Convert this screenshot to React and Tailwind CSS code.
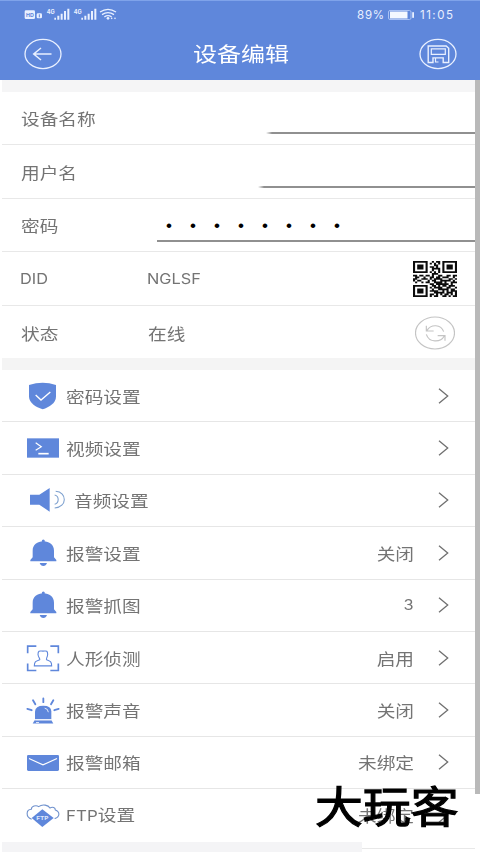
import React from 'react';

const CJK = "font-['Noto_Sans_CJK_SC',sans-serif]";
const LATIN = "font-['Inter','Noto_Sans_CJK_SC',sans-serif]";

function Wide({ children, right = false, className = '' }) {
  return (
    <span
      className={`block whitespace-nowrap scale-x-[1.167] text-[16px] leading-[20px] font-normal text-[#747474] ${right ? 'origin-right' : 'origin-left'} ${className || CJK}`}
    >
      {children}
    </span>
  );
}

function Chevron() {
  return (
    <svg className="h-[16px] w-[11px]" viewBox="0 0 11 16" fill="none" stroke="#707070" strokeWidth="1.3">
      <path d="M1 .8 9.7 8 1 15.2" />
    </svg>
  );
}

const BLUE = '#5f87db';

const ICONS = {
  shield: {
    box: '72 0 126 156',
    art: (
      <>
        <path d="M87 45Q108 38 128 38T168 45V80C168 99 148 111 128 118C106 110 88 99 87 80Z" fill={BLUE} />
        <path d="m107 75 16 15 28-24" fill="none" stroke="#fff" strokeWidth="4" />
      </>
    ),
  },
  video: {
    box: '72 157 126 156',
    art: (
      <>
        <path d="M81 206h96v58H81z" fill={BLUE} />
        <path d="m107 219 17 12-17 11" fill="none" stroke="#fff" strokeWidth="3.5" />
        <path d="M115 252h31" stroke="#fff" strokeWidth="5" />
      </>
    ),
  },
  audio: {
    box: '72 314 126 156',
    art: (
      <>
        <path d="M90 376h28l31-20v71l-31-21H90z" fill={BLUE} />
        <g fill="none" stroke="#7da0cf" strokeWidth="3.2">
          <path d="M164 377C178 380 178 401 164 405" />
          <path d="M167 366C202 368 202 414 164 416" />
        </g>
      </>
    ),
  },
  bell: {
    box: '72 6 126 156',
    art: (
      <g fill={BLUE}>
        <circle cx="130" cy="48" r="4.5" />
        <path d="M98 97V77C98 59 112 50 130 49C148 50 162 59 162 77V97L169 105V109H91V105Z" />
        <path d="M119 114h22q-3 9-11 9t-11-9" />
      </g>
    ),
  },
  person: {
    box: '72 319.5 126 156',
    art: (
      <g fill="none" stroke={BLUE}>
        <path d="M83 383v-21h26M151 362h24v21M83 414v21h26M151 435h24v-21" strokeWidth="5" />
        <path
          d="M103 421H155C155 407 150 407 140 403C137 400 142 397 143 387C143 373 137 377 129 377S114 373 114 387C115 397 122 400 119 403C108 407 103 407 103 421Z"
          strokeWidth="3.3"
        />
      </g>
    ),
  },
  siren: {
    box: '72 11.4 126 156',
    art: (
      <>
        <path d="M105 117V94Q106 77 130 77T154 94V117Z" fill={BLUE} />
        <path d="M104 120H154L160 130H98Z" fill={BLUE} />
        <path d="M106 119h47M134 84q10 1 11 12M108 127h9" fill="none" stroke="#fff" strokeWidth="2.4" />
        <path d="M130 55v11M99 60l7 12M160 60l-7 12M82 86l13 4M176 86l-13 4" stroke={BLUE} strokeWidth="5.5" strokeLinecap="round" />
      </>
    ),
  },
  mail: {
    box: '72 168.3 126 156',
    art: (
      <>
        <rect x="81" y="225" width="96" height="48" rx="4" fill={BLUE} />
        <path d="m87 236 42 19 42-19" fill="none" stroke="#fff" strokeWidth="3.5" />
      </>
    ),
  },
  ftp: {
    box: '72 325.2 126 156',
    art: (
      <>
        <path
          d="M95 416C76 409 78 387 94 386C94 377 108 372 116 378C128 369 145 374 150 382C158 378 166 381 166 388C180 393 181 409 164 414"
          fill="none"
          stroke="#6f91cd"
          strokeWidth="3.3"
        />
        <path d="m127 386 34 26-34 27-32-27z" fill={BLUE} />
        <text x="127" y="418" textAnchor="middle" fill="#dfe8fb" fontSize="16" fontWeight="700" fontFamily="Inter, sans-serif" textLength="37" lengthAdjust="spacingAndGlyphs">
          FTP
        </text>
      </>
    ),
  },
};

const SETTINGS = [
  { icon: 'shield', label: '密码设置' },
  { icon: 'video', label: '视频设置' },
  { icon: 'audio', label: '音频设置', indent: true },
  { icon: 'bell', label: '报警设置', value: '关闭' },
  { icon: 'bell', label: '报警抓图', value: '3' },
  { icon: 'person', label: '人形侦测', value: '启用' },
  { icon: 'siren', label: '报警声音', value: '关闭' },
  { icon: 'mail', label: '报警邮箱', value: '未绑定' },
  { icon: 'ftp', label: 'FTP设置', value: '未绑定' },
];

const QR = [
  '111111100101101111111',
  '100000101010101000001',
  '101110100011001011101',
  '101110101101001011101',
  '101110100111101011101',
  '100000100100101000001',
  '111111101010101111111',
  '000000000111000000000',
  '110110110100110011011',
  '011001001101101110010',
  '110011101011110001101',
  '101100010110011111010',
  '010010110011110100111',
  '000000001101111110100',
  '111111100110101101110',
  '100000101011110011001',
  '101110100100111110110',
  '101110101111001010111',
  '101110100011111011101',
  '100000101101010110101',
  '111111101011001101011',
];

function QrCode() {
  const d = QR.map((row, y) => [...row].map((c, x) => (c === '1' ? `M${x} ${y}h1v1h-1z` : '')).join('')).join('');
  return (
    <svg className="h-[36px] w-[44px]" viewBox="0 0 21 21" preserveAspectRatio="none">
      <path d={d} fill="#0b0b0b" />
    </svg>
  );
}

function StatusIcons() {
  return (
    <svg className="h-[14px] w-[96px]" viewBox="0 0 288 42" fill="#e9f0ff">
      <rect x="2" y="7" width="31" height="26" rx="4" />
      <text x="17.500" y="26" textAnchor="middle" fontSize="16" fontWeight="700" fontFamily="Inter, sans-serif" fill={BLUE}>HD</text>
      <rect x="38" y="16" width="16" height="15" rx="4" />
      <path d="M46 19v9" stroke={BLUE} strokeWidth="3" />
      {[0, 81].map((dx) => (
        <g key={dx} transform={`translate(${dx} 0)`}>
          <text x="68" y="17" fontSize="19" fontWeight="700" fontFamily="Inter, sans-serif" textLength="24" lengthAdjust="spacingAndGlyphs">4G</text>
          <path d="M91 29h5v6h-5zM100 23h6v12h-6zM110 17h6v18h-6zM120 9h6v26h-6zM130 2h6v33h-6z" />
        </g>
      ))}
      <g fill="none" stroke="#e9f0ff" strokeWidth="4">
        <path d="M228 12Q252-4 276 12M234 20Q252 8 270 20M241 27Q252 19 263 27" />
      </g>
      <circle cx="252" cy="31" r="4" />
      <circle cx="263" cy="31" r="2.500" />
      <circle cx="273" cy="31" r="2.500" />
    </svg>
  );
}

function Header() {
  return (
    <header className="h-[80px] border-t border-[#7fa3ea] bg-[#5f87db]">
      <div className="flex h-[27px] items-center justify-between pl-[24px] pr-[25px]">
        <StatusIcons />
        <div className="flex items-center text-[#e9f0ff] font-['Inter',sans-serif] text-[11.500px] leading-[14px]">
          <span className="w-[28px] origin-left whitespace-nowrap tracking-[0.800px]">89%</span>
          <svg className="ml-[3px] mr-[5px] h-[10px] w-[27px]" viewBox="0 0 27 10">
            <rect x=".5" y=".5" width="22.500" height="9" rx="1.500" fill="none" stroke="#a9c1f4" />
            <rect x="2" y="1.500" width="17.500" height="7" fill="#f4f8ff" />
            <rect x="24.200" y="2" width="1.800" height="6" rx="0.800" fill="#e9f0ff" />
          </svg>
          <span className="w-[35px] whitespace-nowrap tracking-[1.500px]">11:05</span>
        </div>
      </div>
      <div className="flex h-[52px] items-center justify-between pl-[24px] pr-[23px]">
        <svg className="h-[32px] w-[38px]" viewBox="0 0 38 32" fill="none" stroke="#e9f0ff">
          <ellipse cx="19" cy="16" rx="18" ry="14.600" strokeWidth="1.300" />
          <path d="M27.500 16H10M17 10l-7.300 6 7.300 6" strokeWidth="1.500" />
        </svg>
        <h1 className="scale-x-[1.2] whitespace-nowrap text-[20px] leading-[28px] text-white font-['Noto_Sans_CJK_SC',sans-serif]">设备编辑</h1>
        <svg className="h-[32px] w-[38px]" viewBox="0 0 38 32" fill="none" stroke="#e9f0ff">
          <ellipse cx="19" cy="16" rx="18" ry="14.600" strokeWidth="1.300" />
          <path d="M9.200 8h18l2.500 2.200V24.500h-5.500v-4.600H14v4.600H9.200z" strokeWidth="1.400" />
          <path d="M12.300 10.800h14v5.600h-14zM16.500 20v4h3" strokeWidth="1.200" />
        </svg>
      </div>
    </header>
  );
}

export default function App() {
  return (
    <div className="relative h-[852px] w-[480px] overflow-hidden bg-white">
      <Header />
      <main className="flex">
        <div className="w-[475px] shrink-0 pl-[2px]">
          <div className="h-[12px] bg-[#f5f5f6]" />
          <div className="flex h-[53px] items-center border-b border-[#e8e8e8] pl-[19px]">
            <Wide>设备名称</Wide>
            <div className="mb-[10px] ml-auto w-[209px] self-end border-b-2 border-[#909090] [mask-image:linear-gradient(to_right,transparent,black_6px)]" />
          </div>
          <div className="flex h-[54px] items-center border-b border-[#e8e8e8] pl-[19px]">
            <Wide>用户名</Wide>
            <div className="mb-[10px] ml-auto w-[217px] self-end border-b-2 border-[#909090] [mask-image:linear-gradient(to_right,transparent,black_6px)]" />
          </div>
          <div className="flex h-[53px] items-center border-b border-[#e8e8e8] pl-[19px]">
            <Wide>密码</Wide>
            <div className="mb-[9px] ml-auto flex h-[27px] w-[318px] self-end border-b-2 border-[#909090] text-[17px] leading-[21px] text-black font-['Liberation_Sans',sans-serif]">
              {Array.from({ length: 8 }, (_, i) => (
                <span key={i} className="w-[24px] text-center">•</span>
              ))}
            </div>
          </div>
          <div className="flex h-[54px] items-center border-b border-[#e8e8e8] pl-[18px] pr-[18px]">
            <div className="w-[127px]"><Wide className="font-['Inter',sans-serif] !text-[14px]">DID</Wide></div>
            <Wide className="font-['Inter',sans-serif] !text-[14px]">NGLSF</Wide>
            <div className="ml-auto flex"><QrCode /></div>
          </div>
          <div className="flex h-[52px] items-center pl-[19px] pr-[20px] pt-px">
            <div className="w-[127px]"><Wide>状态</Wide></div>
            <Wide>在线</Wide>
            <svg className="ml-auto h-[34px] w-[40px]" viewBox="0 0 120 102" fill="none" stroke="#c4c4c4">
              <ellipse cx="60" cy="51" rx="58.500" ry="48" strokeWidth="3.500" />
              <path d="M34 29v16h22M36 43C48 24 78 24 86 47M90 74V59H68M88 60C76 81 42 80 34 55" strokeWidth="3.500" />
            </svg>
          </div>
          <div className="h-[12px] bg-[#f4f4f4]" />
          <ul>
            {SETTINGS.map(({ icon, label, value, indent }, i) => (
              <li
                key={i}
                className={`flex h-[52.400px] items-center pl-[22px] pr-[26px] ${i < 8 ? 'border-b border-[#e6e6e6]' : ''}`}
              >
                <svg className="h-[52px] w-[42px] shrink-0" viewBox={ICONS[icon].box}>
                  {ICONS[icon].art}
                </svg>
                <div className={indent ? 'pl-[8px]' : ''}>
                  {icon === 'ftp' ? (
                    <Wide className={LATIN}>
                      <span className="text-[14.500px]">FTP</span>设置
                    </Wide>
                  ) : (
                    <Wide>{label}</Wide>
                  )}
                </div>
                <div className="ml-auto mr-[24px]">
                  {value && <Wide right className={value === '3' ? "font-['Inter',sans-serif] !text-[14px]" : CJK}>{value}</Wide>}
                </div>
                <Chevron />
              </li>
            ))}
          </ul>
          <div className="flex">
            <div className="h-[12px] w-[360px] bg-[#f4f4f6]" />
            <div className="h-[7px] grow border-b border-[#e8e8e8]" />
          </div>
        </div>
        <div className="h-[714px] w-[5px] bg-[#b9b9b9]" />
      </main>
      <div className="absolute left-[315px] top-[775px] origin-left scale-x-[1.1] whitespace-nowrap text-[43.500px] font-normal leading-[60px] text-black [-webkit-text-stroke:1.2px_black] font-['Noto_Sans_CJK_SC',sans-serif]">
        大玩客
      </div>
    </div>
  );
}
